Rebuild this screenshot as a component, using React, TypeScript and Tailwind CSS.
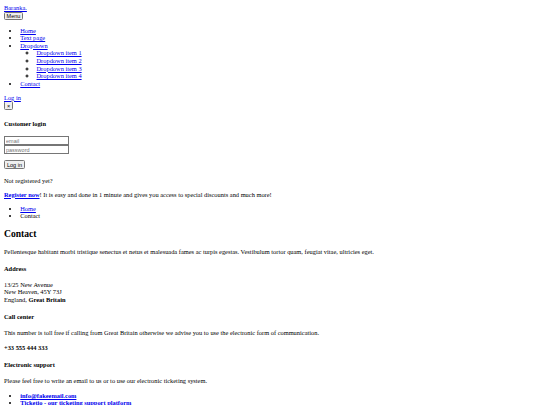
import React from 'react';

const link = 'text-[#0000ee] underline';
const btn =
  "font-['Liberation_Sans',Arial,sans-serif] text-[5.5px] leading-[6px] text-black bg-[#efefef] border border-[#767676] rounded-[1.5px] h-[8.5px] block whitespace-nowrap";
const input =
  "block w-[65px] h-[8.5px] border border-[#767676] bg-white px-[1px] font-['Liberation_Sans',Arial,sans-serif] text-[5.5px] leading-[6px] placeholder:text-[#757575] outline-none";

export default function App() {
  return (
    <div className="min-h-screen bg-white text-black px-[4px] pt-[4px] font-['Liberation_Serif','Times_New_Roman',serif] text-[6.4px] leading-[7.6px]">
      {/* Navbar */}
      <div>
        <a href="#" className={link}>Baranka.</a>
      </div>
      <button className={btn + ' w-[19px] px-0'}>Menu</button>

      <ul className="list-disc pl-[16.25px] mt-[6.5px]">
        <li><a href="#" className={link}>Home</a></li>
        <li><a href="#" className={link}>Text page</a></li>
        <li>
          <a href="#" className={link}>Dropdown</a>
          <ul className="list-[circle] pl-[16.25px]">
            <li><a href="#" className={link}>Dropdown item 1</a></li>
            <li><a href="#" className={link}>Dropdown item 2</a></li>
            <li><a href="#" className={link}>Dropdown item 3</a></li>
            <li><a href="#" className={link}>Dropdown item 4</a></li>
          </ul>
        </li>
        <li><a href="#" className={link}>Contact</a></li>
      </ul>

      {/* Login */}
      <div className="mt-[6.5px]">
        <a href="#" className={link}>Log in</a>
      </div>
      <button className={btn + ' w-[9px] px-0'}>×</button>
      <h4 className="font-bold mt-[9.7px]">Customer login</h4>
      <form className="mt-[9.2px]">
        <input className={input} placeholder="email" />
        <input className={input + ' mt-[0.5px]'} type="password" placeholder="password" />
        <button type="button" className={btn + ' w-[21px] px-0 mt-[6.5px]'}>Log in</button>
      </form>
      <p className="mt-[7.7px]">Not registered yet?</p>
      <p className="mt-[6.4px]">
        <a href="#" className={link + ' font-bold'}>Register now</a>! It is easy and done in 1 minute and gives you access to special discounts and much more!
      </p>

      {/* Breadcrumb */}
      <ul className="list-disc pl-[16.25px] mt-[6.4px]">
        <li><a href="#" className={link}>Home</a></li>
        <li>Contact</li>
      </ul>

      {/* Content */}
      <h2 className="font-bold text-[9.6px] leading-[11.2px] mt-[8px]">Contact</h2>
      <p className="mt-[8.6px]">
        Pellentesque habitant morbi tristique senectus et netus et malesuada fames ac turpis egestas. Vestibulum tortor quam, feugiat vitae, ultricies eget.
      </p>

      <h4 className="font-bold mt-[9.4px]">Address</h4>
      <p className="mt-[8.4px]">
        13/25 New Avenue
        <br />
        New Heaven, 45Y 73J
        <br />
        England, <strong className="font-bold">Great Britain</strong>
      </p>

      <h4 className="font-bold mt-[9.6px]">Call center</h4>
      <p className="mt-[8.4px]">
        This number is toll free if calling from Great Britain otherwise we advise you to use the electronic form of communication.
      </p>
      <p className="mt-[7.4px]">
        <strong className="font-bold">+33 555 444 333</strong>
      </p>

      <h4 className="font-bold mt-[9.4px]">Electronic support</h4>
      <p className="mt-[8.4px]">Please feel free to write an email to us or to use our electronic ticketing system.</p>
      <ul className="list-disc pl-[16.25px] mt-[7.4px] mb-[6.5px]">
        <li><a href="#" className={link + ' font-bold'}>info@fakeemail.com</a></li>
        <li><a href="#" className={link + ' font-bold'}>Ticketio - our ticketing support platform</a></li>
      </ul>
    </div>
  );
}
